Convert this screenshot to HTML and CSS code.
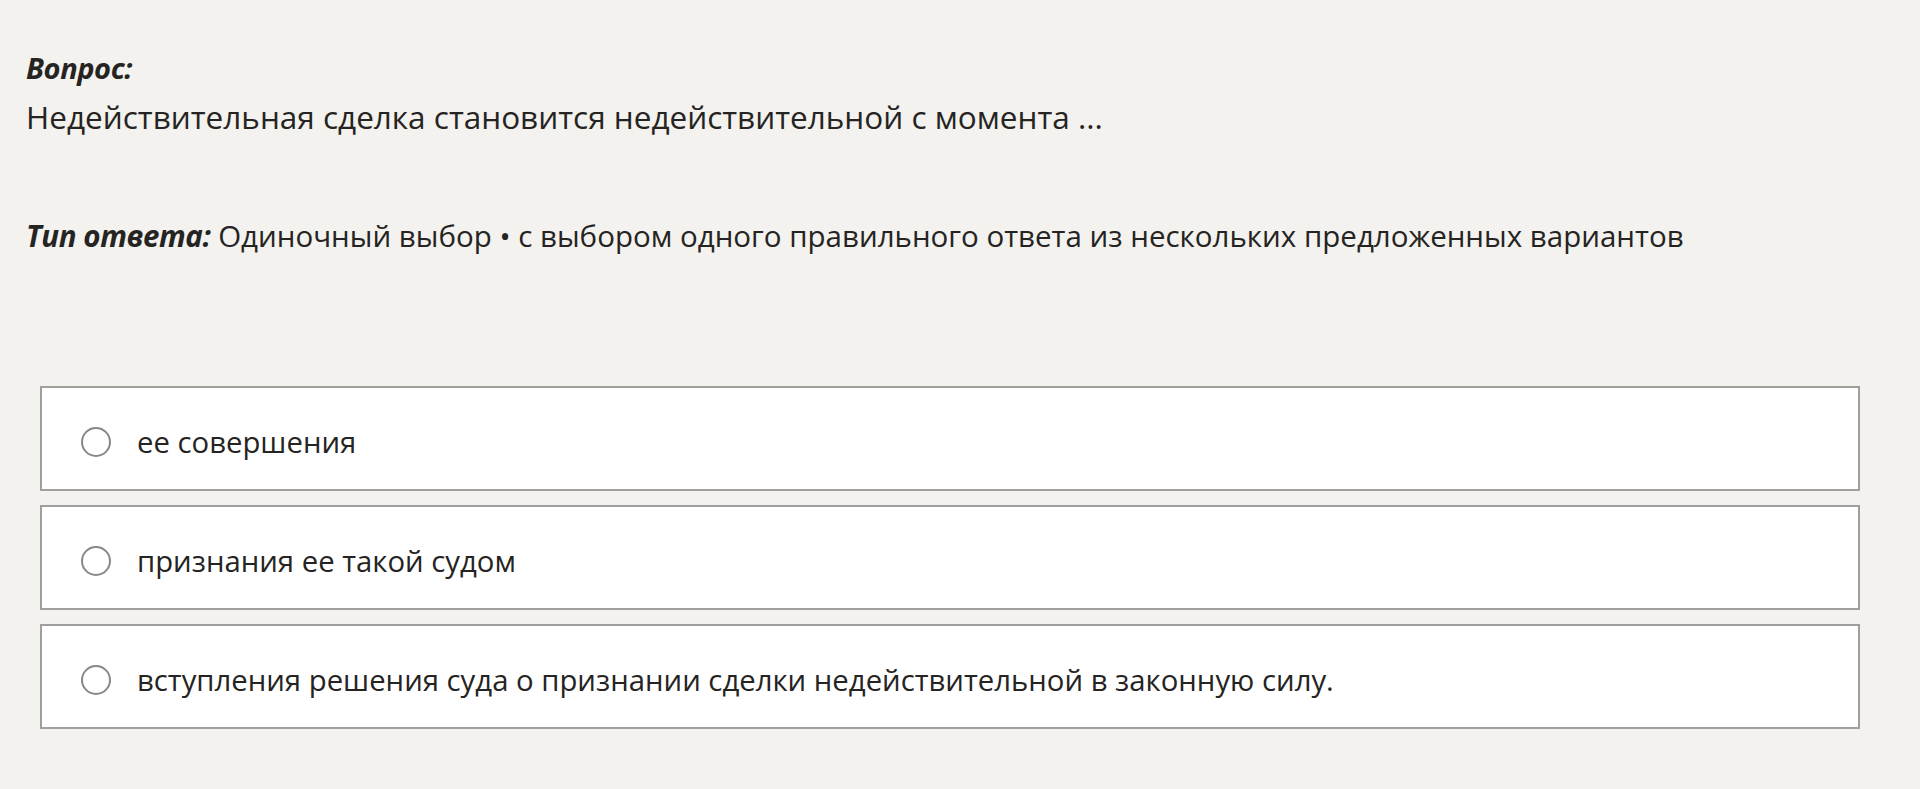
FILE: index.html
```html
<!DOCTYPE html>
<html lang="ru">
<head>
<meta charset="utf-8">
<link rel="stylesheet" href="styles.css">
</head>
<body>
<main class="page">
  <section class="question">
    <div class="label">Вопрос:</div>
    <div class="question-text">Недействительная сделка становится недействительной с момента ...</div>
  </section>
  <section class="answer-type">
    <span class="label">Тип ответа:</span> Одиночный выбор • с выбором одного правильного ответа из нескольких предложенных вариантов
  </section>
  <section class="options">
    <label class="option"><span class="radio"></span><span class="option-text">ее совершения</span></label>
    <label class="option"><span class="radio"></span><span class="option-text">признания ее такой судом</span></label>
    <label class="option"><span class="radio"></span><span class="option-text">вступления решения суда о признании сделки недействительной в законную силу.</span></label>
  </section>
</main>
</body>
</html>
```

FILE: styles.css
```css
html, body {
  margin: 0;
  padding: 0;
  background: #f3f2ee;
}
body {
  font-family: "Open Sans", "Noto Sans", sans-serif;
  color: #252423;
  width: 1920px;
  height: 789px;
  overflow: hidden;
}
.page {
  padding: 47px 0 0 26px;
}
.label {
  font-weight: 700;
  font-style: italic;
  letter-spacing: -0.4px;
}
.question .label {
  font-size: 29px;
  line-height: 42px;
}
.question-text {
  margin-top: 3px;
  font-size: 31.5px;
  line-height: 50px;
}
.answer-type {
  margin-top: 73px;
  font-size: 29.5px;
  line-height: 42px;
}
.options {
  margin-top: 129px;
  margin-left: 14px;
  width: 1820px;
  display: flex;
  flex-direction: column;
  gap: 14px;
}
.option {
  display: flex;
  align-items: center;
  height: 105px;
  box-sizing: border-box;
  background: #fff;
  border: 2px solid #a19f9d;
  padding: 7px 0 0 39px;
}
.radio {
  width: 30px;
  height: 30px;
  border: 2px solid #8a8886;
  border-radius: 50%;
  box-sizing: border-box;
  flex: none;
}
.option-text {
  margin-left: 26px;
  font-size: 29.3px;
}
```
